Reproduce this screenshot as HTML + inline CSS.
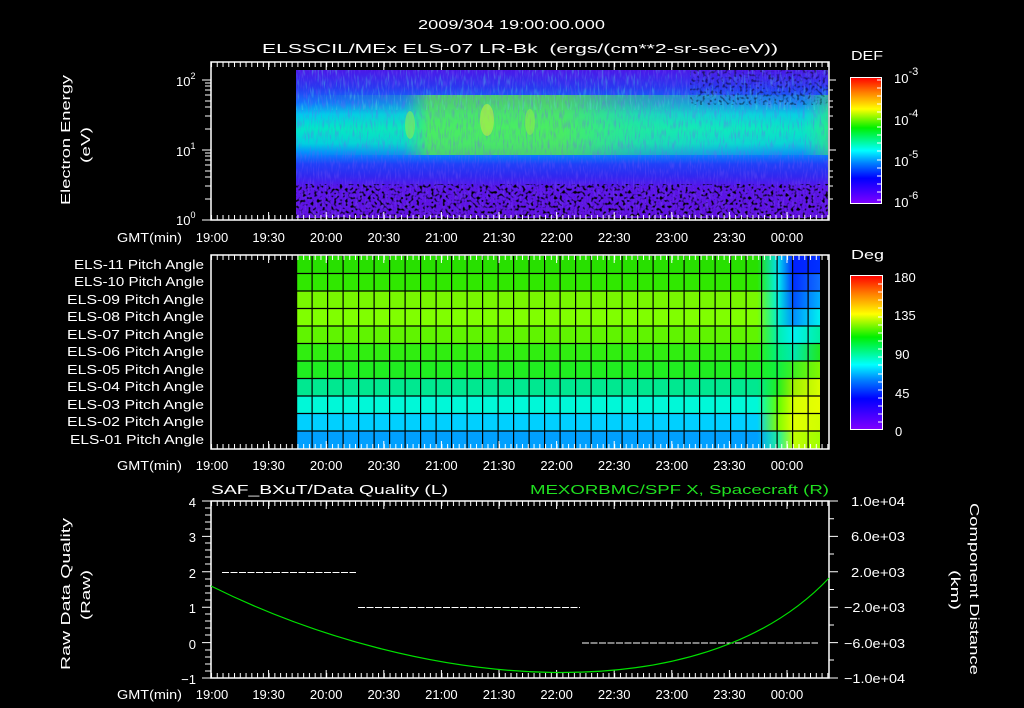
<!DOCTYPE html>
<html><head><meta charset="utf-8"><style>
html,body{margin:0;padding:0;background:#000;width:1024px;height:708px;overflow:hidden}
svg{display:block}
text{font-family:"Liberation Sans",sans-serif;fill:#fff;font-size:13px}
</style></head><body>
<svg width="1024" height="708" viewBox="0 0 1024 708" xmlns="http://www.w3.org/2000/svg">
<defs>
<linearGradient id="spec" x1="0" y1="70" x2="0" y2="217" gradientUnits="userSpaceOnUse">
<stop offset="0" stop-color="#4a18e8"/><stop offset="0.12" stop-color="#2838f0"/>
<stop offset="0.22" stop-color="#1070ff"/><stop offset="0.3" stop-color="#00c8f0"/>
<stop offset="0.4" stop-color="#00e8c8"/><stop offset="0.5" stop-color="#00d0e0"/>
<stop offset="0.56" stop-color="#0090ff"/><stop offset="0.64" stop-color="#2040f8"/>
<stop offset="0.72" stop-color="#3028f0"/><stop offset="0.8" stop-color="#5a14e8"/>
<stop offset="1" stop-color="#6010e0"/></linearGradient>
<linearGradient id="grn" x1="296" y1="0" x2="828" y2="0" gradientUnits="userSpaceOnUse">
<stop offset="0" stop-color="#30f080" stop-opacity="0"/><stop offset="0.2" stop-color="#30f080" stop-opacity="0.2"/>
<stop offset="0.25" stop-color="#60f040" stop-opacity="0.75"/><stop offset="0.5" stop-color="#60f040" stop-opacity="0.75"/>
<stop offset="0.65" stop-color="#40f070" stop-opacity="0.45"/><stop offset="0.8" stop-color="#30f0a0" stop-opacity="0.3"/>
<stop offset="0.95" stop-color="#30f0a0" stop-opacity="0.15"/><stop offset="1" stop-color="#40f060" stop-opacity="0.6"/></linearGradient>
<linearGradient id="cb" x1="0" y1="1" x2="0" y2="0">
<stop offset="0" stop-color="#8000ff"/><stop offset="0.2" stop-color="#0000ff"/><stop offset="0.32" stop-color="#0080ff"/>
<stop offset="0.42" stop-color="#00ffff"/><stop offset="0.6" stop-color="#00f000"/><stop offset="0.75" stop-color="#ffff00"/>
<stop offset="0.88" stop-color="#ff8000"/><stop offset="1" stop-color="#ff0000"/></linearGradient>
<filter id="nz" x="0" y="0" width="1" height="1">
<feTurbulence type="fractalNoise" baseFrequency="0.35" numOctaves="1" seed="3"/>
<feColorMatrix type="matrix" values="0 0 0 0 0  0 0 0 0 0  0 0 0 0 0  5 0 0 0 -2.6"/></filter>
<filter id="nz2" x="0" y="0" width="1" height="1">
<feTurbulence type="fractalNoise" baseFrequency="0.5 0.08" numOctaves="2" seed="7"/>
<feColorMatrix type="matrix" values="0 0 0 0 0.1  0 0 0 0 0.9  0 0 0 0 0.7  3 0 0 0 -1.6"/></filter>
<filter id="nz3" x="0" y="0" width="1" height="1">
<feTurbulence type="fractalNoise" baseFrequency="0.6 0.1" numOctaves="2" seed="11"/>
<feColorMatrix type="matrix" values="0 0 0 0 0.2  0 0 0 0 0.1  0 0 0 0 0.9  3 0 0 0 -1.4"/></filter>
<linearGradient id="r1" x1="296" x2="820" gradientUnits="userSpaceOnUse"><stop offset=".88" stop-color="#28e000"/><stop offset=".92" stop-color="#00e0f0"/><stop offset=".95" stop-color="#0020ff"/><stop offset="1" stop-color="#0030ff"/></linearGradient>
<linearGradient id="r2" x1="296" x2="820" gradientUnits="userSpaceOnUse"><stop offset=".88" stop-color="#30e800"/><stop offset=".92" stop-color="#00f0f0"/><stop offset=".95" stop-color="#0030ff"/><stop offset="1" stop-color="#1070ff"/></linearGradient>
<linearGradient id="r3" x1="296" x2="820" gradientUnits="userSpaceOnUse"><stop offset=".88" stop-color="#78f800"/><stop offset=".92" stop-color="#00f0e0"/><stop offset=".95" stop-color="#0050ff"/><stop offset="1" stop-color="#00b0ff"/></linearGradient>
<linearGradient id="r4" x1="296" x2="820" gradientUnits="userSpaceOnUse"><stop offset=".88" stop-color="#80ff00"/><stop offset=".92" stop-color="#00f0d0"/><stop offset=".95" stop-color="#0090ff"/><stop offset="1" stop-color="#00f0f0"/></linearGradient>
<linearGradient id="r5" x1="296" x2="820" gradientUnits="userSpaceOnUse"><stop offset=".88" stop-color="#60f400"/><stop offset=".92" stop-color="#00f0b0"/><stop offset=".95" stop-color="#00f0f0"/><stop offset="1" stop-color="#00f0a0"/></linearGradient>
<linearGradient id="r6" x1="296" x2="820" gradientUnits="userSpaceOnUse"><stop offset=".88" stop-color="#30ee10"/><stop offset=".92" stop-color="#00f080"/><stop offset=".95" stop-color="#00e8b0"/><stop offset="1" stop-color="#20e820"/></linearGradient>
<linearGradient id="r7" x1="296" x2="820" gradientUnits="userSpaceOnUse"><stop offset=".88" stop-color="#20ee20"/><stop offset=".92" stop-color="#10f040"/><stop offset=".95" stop-color="#40f020"/><stop offset="1" stop-color="#80f800"/></linearGradient>
<linearGradient id="r8" x1="296" x2="820" gradientUnits="userSpaceOnUse"><stop offset=".88" stop-color="#00e890"/><stop offset=".92" stop-color="#20f020"/><stop offset=".95" stop-color="#a0f000"/><stop offset="1" stop-color="#d8ff00"/></linearGradient>
<linearGradient id="r9" x1="296" x2="820" gradientUnits="userSpaceOnUse"><stop offset=".88" stop-color="#00f8d8"/><stop offset=".92" stop-color="#60ff00"/><stop offset=".95" stop-color="#d8ff00"/><stop offset="1" stop-color="#e8ff00"/></linearGradient>
<linearGradient id="r10" x1="296" x2="820" gradientUnits="userSpaceOnUse"><stop offset=".88" stop-color="#00d0ff"/><stop offset=".92" stop-color="#80ff00"/><stop offset=".95" stop-color="#e0ff00"/><stop offset="1" stop-color="#d0ff00"/></linearGradient>
<linearGradient id="r11" x1="296" x2="820" gradientUnits="userSpaceOnUse"><stop offset=".88" stop-color="#00a0ff"/><stop offset=".92" stop-color="#20f0a0"/><stop offset=".95" stop-color="#c0ff00"/><stop offset="1" stop-color="#a0ff00"/></linearGradient>
<pattern id="vt" x="296" y="0" width="15.5" height="708" patternUnits="userSpaceOnUse"><rect x="0" y="0" width="1.2" height="708" fill="#000"/></pattern>
<pattern id="tkTop" x="211" y="0" width="5.76" height="10" patternUnits="userSpaceOnUse"><rect x="0" y="0" width="1" height="10" fill="#fff"/></pattern>
</defs>

<!-- titles -->
<text x="418" y="29" font-size="16" textLength="187" lengthAdjust="spacingAndGlyphs">2009/304 19:00:00.000</text>
<text x="262" y="53" font-size="16" textLength="516" lengthAdjust="spacingAndGlyphs" xml:space="preserve">ELSSCIL/MEx ELS-07 LR-Bk  (ergs/(cm**2-sr-sec-eV))</text>

<!-- TOP PANEL -->
<rect x="296" y="70" width="532" height="148" fill="url(#spec)"/>
<rect x="296" y="95" width="532" height="60" fill="url(#grn)"/>
<rect x="296" y="70" width="532" height="148" filter="url(#nz3)" opacity="0.35"/>
<rect x="296" y="70" width="532" height="40" filter="url(#nz2)" opacity="0.4"/>
<ellipse cx="487" cy="120" rx="7" ry="16" fill="#c0f040" opacity="0.6"/>
<ellipse cx="410" cy="125" rx="5" ry="14" fill="#a0f040" opacity="0.5"/>
<ellipse cx="530" cy="122" rx="5" ry="13" fill="#a0f040" opacity="0.45"/>
<rect x="296" y="184" width="532" height="34" filter="url(#nz)"/>
<rect x="690" y="70" width="138" height="35" filter="url(#nz)" opacity="0.5"/>
<rect x="211" y="62" width="618" height="158" fill="none" stroke="#fff" stroke-width="1.5"/>
<rect x="211" y="62" width="618" height="5" fill="url(#tkTop)"/>
<rect x="211" y="215" width="618" height="5" fill="url(#tkTop)"/>
<g stroke="#fff" stroke-width="1">
<path d="M202 80H211M202 150H211M202 220H211M205 199H211M205 186H211M205 177H211M205 171H211M205 165H211M205 160H211M205 156H211M205 153H211M205 129H211M205 116H211M205 107H211M205 101H211M205 95H211M205 90H211M205 86H211M205 83H211"/>
<path d="M829 80H836M829 150H836M829 199H833M829 186H833M829 177H833M829 171H833M829 160H833M829 129H833M829 116H833M829 107H833M829 101H833M829 90H833"/>
<path d="M268.6 62V70M326.2 62V70M383.8 62V70M441.4 62V70M499 62V70M556.6 62V70M614.2 62V70M671.8 62V70M729.4 62V70M787 62V70M268.6 212V220M326.2 212V220M383.8 212V220M441.4 212V220M499 212V220M556.6 212V220M614.2 212V220M671.8 212V220M729.4 212V220M787 212V220"/>
</g>
<text x="176" y="86" font-size="14">10<tspan font-size="9" dy="-7">2</tspan></text>
<text x="176" y="156" font-size="14">10<tspan font-size="9" dy="-7">1</tspan></text>
<text x="176" y="225" font-size="14">10<tspan font-size="9" dy="-7">0</tspan></text>
<text transform="translate(70,205) rotate(-90)" font-size="15" textLength="130" lengthAdjust="spacingAndGlyphs">Electron Energy</text>
<text transform="translate(90,163) rotate(-90)" font-size="15" textLength="36" lengthAdjust="spacingAndGlyphs">(eV)</text>
<g font-size="14" text-anchor="middle">
<text x="117" y="242" text-anchor="start" textLength="65" lengthAdjust="spacingAndGlyphs">GMT(min)</text>
<text x="212" y="242">19:00</text><text x="268.6" y="242">19:30</text><text x="326.2" y="242">20:00</text><text x="383.8" y="242">20:30</text><text x="441.4" y="242">21:00</text><text x="499" y="242">21:30</text><text x="556.6" y="242">22:00</text><text x="614.2" y="242">22:30</text><text x="671.8" y="242">23:00</text><text x="729.4" y="242">23:30</text><text x="787" y="242">00:00</text>
</g>
<!-- DEF colorbar -->
<text x="851" y="60" font-size="16" textLength="32" lengthAdjust="spacingAndGlyphs">DEF</text>
<rect x="850.5" y="77.5" width="31" height="126" fill="url(#cb)" stroke="#fff"/>
<g stroke="#fff"><path d="M877 80H882M877 88H882M877 96H882M877 104H882M877 112H882M877 119H882M877 127H882M877 135H882M877 143H882M877 151H882M877 160H882M877 168H882M877 176H882M877 184H882M877 192H882M877 200H882"/></g>
<text x="894" y="83" font-size="16">10<tspan font-size="11" dy="-8">-3</tspan></text>
<text x="894" y="125" font-size="16">10<tspan font-size="11" dy="-8">-4</tspan></text>
<text x="894" y="166" font-size="16">10<tspan font-size="11" dy="-8">-5</tspan></text>
<text x="894" y="207" font-size="16">10<tspan font-size="11" dy="-8">-6</tspan></text>

<!-- MID PANEL -->
<g>
<rect x="296" y="256" width="524" height="17.5" fill="url(#r1)"/>
<rect x="296" y="273.5" width="524" height="17.5" fill="url(#r2)"/>
<rect x="296" y="291" width="524" height="17.5" fill="url(#r3)"/>
<rect x="296" y="308.5" width="524" height="17.5" fill="url(#r4)"/>
<rect x="296" y="326" width="524" height="17.5" fill="url(#r5)"/>
<rect x="296" y="343.5" width="524" height="17.5" fill="url(#r6)"/>
<rect x="296" y="361" width="524" height="17.5" fill="url(#r7)"/>
<rect x="296" y="378.5" width="524" height="17.5" fill="url(#r8)"/>
<rect x="296" y="396" width="524" height="17.5" fill="url(#r9)"/>
<rect x="296" y="413.5" width="524" height="17.5" fill="url(#r10)"/>
<rect x="296" y="431" width="524" height="18" fill="url(#r11)"/>
</g>
<rect x="296" y="256" width="524" height="193" fill="url(#vt)"/>
<g stroke="#000" stroke-width="1.2"><path d="M296 273.5H820M296 291H820M296 308.5H820M296 326H820M296 343.5H820M296 361H820M296 378.5H820M296 396H820M296 413.5H820M296 431H820"/></g>
<rect x="211" y="255" width="618" height="194" fill="none" stroke="#fff" stroke-width="1.5"/>
<rect x="211" y="255" width="618" height="5" fill="url(#tkTop)"/>
<rect x="211" y="444" width="618" height="5" fill="url(#tkTop)"/>
<g stroke="#fff"><path d="M268.6 255V263M326.2 255V263M383.8 255V263M441.4 255V263M499 255V263M556.6 255V263M614.2 255V263M671.8 255V263M729.4 255V263M787 255V263M268.6 441V449M326.2 441V449M383.8 441V449M441.4 441V449M499 441V449M556.6 441V449M614.2 441V449M671.8 441V449M729.4 441V449M787 441V449"/></g>
<g font-size="13">
<text x="74" y="269" textLength="130" lengthAdjust="spacingAndGlyphs">ELS-11 Pitch Angle</text><text x="74" y="286" textLength="130" lengthAdjust="spacingAndGlyphs">ELS-10 Pitch Angle</text><text x="67" y="304" textLength="137" lengthAdjust="spacingAndGlyphs">ELS-09 Pitch Angle</text><text x="67" y="321" textLength="137" lengthAdjust="spacingAndGlyphs">ELS-08 Pitch Angle</text><text x="67" y="339" textLength="137" lengthAdjust="spacingAndGlyphs">ELS-07 Pitch Angle</text><text x="67" y="356" textLength="137" lengthAdjust="spacingAndGlyphs">ELS-06 Pitch Angle</text><text x="67" y="374" textLength="137" lengthAdjust="spacingAndGlyphs">ELS-05 Pitch Angle</text><text x="67" y="391" textLength="137" lengthAdjust="spacingAndGlyphs">ELS-04 Pitch Angle</text><text x="67" y="409" textLength="137" lengthAdjust="spacingAndGlyphs">ELS-03 Pitch Angle</text><text x="67" y="426" textLength="137" lengthAdjust="spacingAndGlyphs">ELS-02 Pitch Angle</text><text x="70" y="444" textLength="134" lengthAdjust="spacingAndGlyphs">ELS-01 Pitch Angle</text>
</g>
<g font-size="14" text-anchor="middle">
<text x="117" y="470" text-anchor="start" textLength="65" lengthAdjust="spacingAndGlyphs">GMT(min)</text>
<text x="212" y="470">19:00</text><text x="268.6" y="470">19:30</text><text x="326.2" y="470">20:00</text><text x="383.8" y="470">20:30</text><text x="441.4" y="470">21:00</text><text x="499" y="470">21:30</text><text x="556.6" y="470">22:00</text><text x="614.2" y="470">22:30</text><text x="671.8" y="470">23:00</text><text x="729.4" y="470">23:30</text><text x="787" y="470">00:00</text>
</g>
<text x="851" y="259" font-size="16" textLength="33" lengthAdjust="spacingAndGlyphs">Deg</text>
<rect x="850.5" y="275.5" width="32" height="154" fill="url(#cb)" stroke="#fff"/>
<g stroke="#fff"><path d="M878 284H882M878 292H882M878 300H882M878 308H882M878 317H882M878 325H882M878 333H882M878 341H882M878 349H882M878 357H882M878 365H882M878 374H882M878 382H882M878 390H882M878 398H882M878 406H882M878 414H882M878 422H882"/></g>
<g font-size="17"><text x="894" y="282">180</text><text x="894" y="320">135</text><text x="895" y="359">90</text><text x="895" y="398">45</text><text x="895" y="436">0</text></g>

<!-- BOTTOM PANEL -->
<text x="211" y="494" font-size="15" textLength="237" lengthAdjust="spacingAndGlyphs">SAF_BXuT/Data Quality (L)</text>
<text x="530" y="494" font-size="15" textLength="299" lengthAdjust="spacingAndGlyphs" style="fill:#20e020">MEXORBMC/SPF X, Spacecraft (R)</text>
<rect x="211" y="501" width="618" height="177" fill="none" stroke="#fff" stroke-width="1.5"/>
<rect x="211" y="501" width="618" height="5" fill="url(#tkTop)"/>
<rect x="211" y="673" width="618" height="5" fill="url(#tkTop)"/>
<g stroke="#fff"><path d="M268.6 501V509M326.2 501V509M383.8 501V509M441.4 501V509M499 501V509M556.6 501V509M614.2 501V509M671.8 501V509M729.4 501V509M787 501V509M268.6 670V678M326.2 670V678M383.8 670V678M441.4 670V678M499 670V678M556.6 670V678M614.2 670V678M671.8 670V678M729.4 670V678M787 670V678"/>
<path d="M202 501H211M202 536.4H211M202 571.8H211M202 607.2H211M202 642.6H211M202 678H211M205 508H211M205 515H211M205 522H211M205 529H211M205 543H211M205 550H211M205 557H211M205 564H211M205 579H211M205 586H211M205 593H211M205 600H211M205 614H211M205 621H211M205 628H211M205 635H211M205 650H211M205 657H211M205 664H211M205 671H211"/>
<path d="M829 501H838M829 536.4H838M829 571.8H838M829 607.2H838M829 642.6H838M829 678H838M829 518.7H834M829 554H834M829 589.5H834M829 625H834M829 660H834"/></g>
<g font-size="14" text-anchor="end"><text x="196" y="507">4</text><text x="196" y="542">3</text><text x="196" y="578">2</text><text x="196" y="613">1</text><text x="196" y="649">0</text><text x="196" y="684">−1</text></g>
<g font-size="13"><text x="851" y="506" textLength="54" lengthAdjust="spacingAndGlyphs">1.0e+04</text><text x="851" y="541" textLength="54" lengthAdjust="spacingAndGlyphs">6.0e+03</text><text x="851" y="577" textLength="54" lengthAdjust="spacingAndGlyphs">2.0e+03</text><text x="844" y="612" textLength="61" lengthAdjust="spacingAndGlyphs">−2.0e+03</text><text x="844" y="648" textLength="61" lengthAdjust="spacingAndGlyphs">−6.0e+03</text><text x="844" y="683" textLength="61" lengthAdjust="spacingAndGlyphs">−1.0e+04</text></g>
<path d="M222 572.5H356M358 607.5H580M582 643H818" stroke="#fff" stroke-width="1" stroke-dasharray="7 1.5"/>
<path d="M211 586 C 420 690 700 715 829 578" stroke="#00e000" stroke-width="1.2" fill="none"/>
<text transform="translate(70,670) rotate(-90)" font-size="15" textLength="152" lengthAdjust="spacingAndGlyphs">Raw Data Quality</text>
<text transform="translate(90,620) rotate(-90)" font-size="15" textLength="50" lengthAdjust="spacingAndGlyphs">(Raw)</text>
<text transform="translate(970,503) rotate(90)" font-size="15" textLength="172" lengthAdjust="spacingAndGlyphs">Component Distance</text>
<text transform="translate(951,570) rotate(90)" font-size="15" textLength="40" lengthAdjust="spacingAndGlyphs">(km)</text>
<g font-size="14" text-anchor="middle">
<text x="117" y="699" text-anchor="start" textLength="65" lengthAdjust="spacingAndGlyphs">GMT(min)</text>
<text x="212" y="699">19:00</text><text x="268.6" y="699">19:30</text><text x="326.2" y="699">20:00</text><text x="383.8" y="699">20:30</text><text x="441.4" y="699">21:00</text><text x="499" y="699">21:30</text><text x="556.6" y="699">22:00</text><text x="614.2" y="699">22:30</text><text x="671.8" y="699">23:00</text><text x="729.4" y="699">23:30</text><text x="787" y="699">00:00</text>
</g>
</svg>
</body></html>
